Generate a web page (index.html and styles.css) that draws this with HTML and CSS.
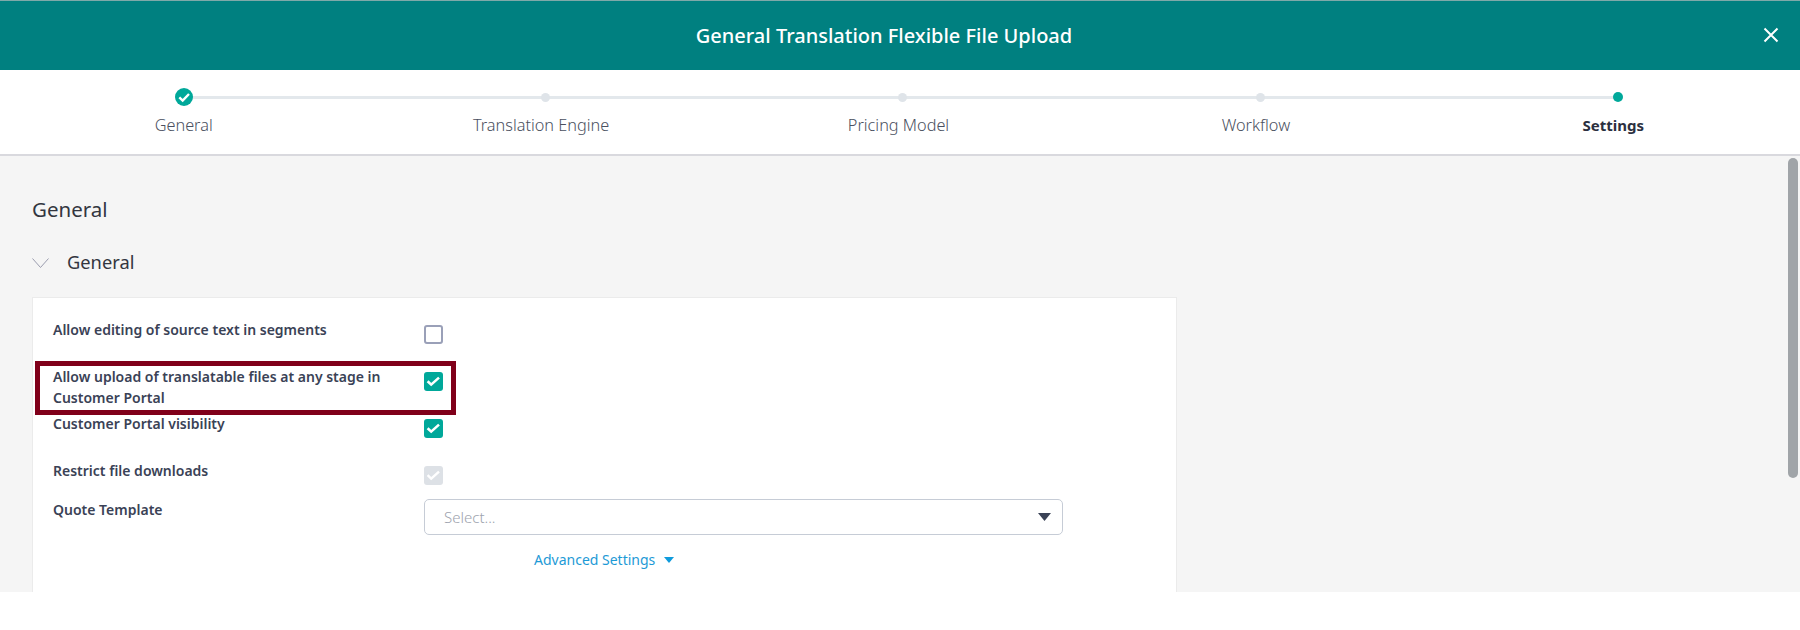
FILE: index.html
```html
<!DOCTYPE html>
<html lang="en">
<head>
<meta charset="utf-8">
<title>General Translation Flexible File Upload</title>
<link rel="stylesheet" href="styles.css">
</head>
<body>
<div class="page">
  <header class="topbar">
    <h1 class="title">General Translation Flexible File Upload</h1>
    <button class="close" aria-label="Close">
      <svg width="16" height="16" viewBox="0 0 16 16"><path d="M1.5 1.5L14.5 14.5M14.5 1.5L1.5 14.5" fill="none" stroke="#fff" stroke-width="2"/></svg>
    </button>
  </header>
  <nav class="stepper">
    <div class="track"></div>
    <div class="step">
      <span class="marker-row">
        <svg class="done" width="18" height="18" viewBox="0 0 18 18"><circle cx="9" cy="9" r="9" fill="#00a89a"/><path d="M4.3 9.3L7.7 12.5L14 6" fill="none" stroke="#fff" stroke-width="2.4"/></svg>
      </span>
      <span class="step-label">General</span>
    </div>
    <div class="step"><span class="marker-row"><span class="dot"></span></span><span class="step-label">Translation Engine</span></div>
    <div class="step"><span class="marker-row"><span class="dot"></span></span><span class="step-label">Pricing Model</span></div>
    <div class="step"><span class="marker-row"><span class="dot"></span></span><span class="step-label">Workflow</span></div>
    <div class="step"><span class="marker-row"><span class="dot dot-active"></span></span><span class="step-label step-label-active">Settings</span></div>
  </nav>
  <main class="content">
    <h2 class="heading">General</h2>
    <div class="section-head">
      <svg width="17" height="10" viewBox="0 0 17 10"><path d="M0.5 0.5L8.5 9.5L16.5 0.5" fill="none" stroke="#9a9cae" stroke-width="1"/></svg>
      <span>General</span>
    </div>
    <section class="card">
      <div class="form">
        <div class="row">
          <div class="label">Allow editing of source text in segments</div>
          <span class="box"></span>
        </div>
        <div class="row">
          <div class="highlight"></div>
          <div class="label">Allow upload of translatable files at any stage in Customer Portal</div>
          <span class="box box-on"><svg width="19" height="19" viewBox="0 0 19 19"><path d="M3.6 9.2L7.2 12.6L15 5.6" fill="none" stroke="#fff" stroke-width="2.6"/></svg></span>
        </div>
        <div class="row">
          <div class="label">Customer Portal visibility</div>
          <span class="box box-on"><svg width="19" height="19" viewBox="0 0 19 19"><path d="M3.6 9.2L7.2 12.6L15 5.6" fill="none" stroke="#fff" stroke-width="2.6"/></svg></span>
        </div>
        <div class="row row-short">
          <div class="label">Restrict file downloads</div>
          <span class="box box-off"><svg width="19" height="19" viewBox="0 0 19 19"><path d="M3.6 9.2L7.2 12.6L15 5.6" fill="none" stroke="#fff" stroke-width="2.4"/></svg></span>
        </div>
        <div class="row row-select">
          <div class="label">Quote Template</div>
          <div class="select">
            <span>Select...</span>
            <svg width="13" height="8" viewBox="0 0 13 8"><path d="M0 0H13L6.5 8Z" fill="#3a4256"/></svg>
          </div>
        </div>
      </div>
      <a class="advanced">Advanced Settings
        <svg width="10" height="6" viewBox="0 0 10 6"><path d="M0 0H10L5 6Z" fill="#0f9bdc"/></svg>
      </a>
    </section>
    <div class="scrollbar"></div>
  </main>
  <div class="footer"></div>
</div>
</body>
</html>
```
FILE: styles.css
```css
* { box-sizing: border-box; }
html, body { margin: 0; padding: 0; background: #fff; }
body { font-family: "Noto Sans", "Open Sans", sans-serif; font-variant-ligatures: common-ligatures; }
.page { width: 1800px; height: 630px; display: flex; flex-direction: column; overflow: hidden; }

.topbar { height: 70px; flex: none; background: #008080; border-top: 1px solid #7fa9a9; padding-right: 32px; display: flex; align-items: center; justify-content: center; position: relative; }
.title { margin: 0; font-size: 20px; font-weight: 500; color: #fff; }
.close { position: absolute; right: 21px; top: 26px; width: 16px; height: 16px; padding: 0; background: none; border: 0; display: block; }
.close svg { display: block; }

.stepper { height: 86px; flex: none; padding: 18px 8px 0 5px; background: #fff; border-bottom: 2px solid #d9d9de; display: grid; grid-template-columns: repeat(5, 1fr); position: relative; }
.track { position: absolute; left: 190px; width: 1426px; top: 26px; height: 3px; background: #e3e8ec; }
.step { display: flex; flex-direction: column; align-items: center; position: relative; }
.marker-row { height: 18px; display: flex; align-items: center; }
.done { display: block; }
.dot { display: block; width: 9px; height: 9px; margin-left: 9px; border-radius: 50%; background: #dfe4e9; }
.dot-active { width: 10px; height: 10px; background: #00a89a; }
.step-label { margin-top: 7px; font-size: 16.3px; line-height: 24px; font-weight: 300; color: #4a5060; }
.step-label-active { font-weight: 700; font-size: 15px; color: #2b3040; }

.content { height: 436px; flex: none; background: #f5f5f5; padding: 41px 0 0 32px; position: relative; overflow: hidden; }
.heading { margin: 0; font-size: 20.5px; line-height: 24px; font-weight: 400; color: #33363f; }
.section-head { margin-top: 28px; height: 24px; display: flex; align-items: center; gap: 18px; font-size: 18.3px; color: #33363f; }
.section-head svg { margin-top: 3px; }
.card { margin-top: 24px; width: 1145px; height: 320px; background: #fff; border: 1px solid #ebebeb; padding: 22px 0 0 20px; }
.form { width: 1020px; display: flex; flex-direction: column; }
.row { display: grid; grid-template-columns: 371px 1fr; min-height: 47px; position: relative; align-items: start; }
.row-short { min-height: 39px; }
.label { margin-top: -1px; font-size: 14px; line-height: 21px; font-weight: 600; color: #3a4256; width: 340px; }
.box { display: block; width: 19px; height: 19px; margin-top: 5px; border: 2px solid #9aa0b8; border-radius: 3px; background: #fff; }
.box svg { display: block; }
.box-on { border: 0; background: #00a89a; }
.box-off { border: 0; background: #dde1e6; }
.highlight { position: absolute; left: -18px; top: -6.5px; width: 421px; height: 54.5px; border: 5px solid #80001a; pointer-events: none; }
.select { width: 639px; height: 36px; margin-top: -1px; border: 1.5px solid #c6ccd6; border-radius: 5px; padding: 0 11px 0 19px; display: flex; align-items: center; justify-content: space-between; font-size: 15px; font-weight: 300; color: #9da3ae; }
.advanced { display: flex; align-items: center; gap: 9px; margin: 2px 0 0 481px; font-size: 14px; line-height: 22px; color: #1d9ad6; }
.scrollbar { position: absolute; right: 2px; top: 2px; width: 10px; height: 320px; border-radius: 5px; background: #a0a4a8; }
.footer { flex: 1; background: #fff; }
```
